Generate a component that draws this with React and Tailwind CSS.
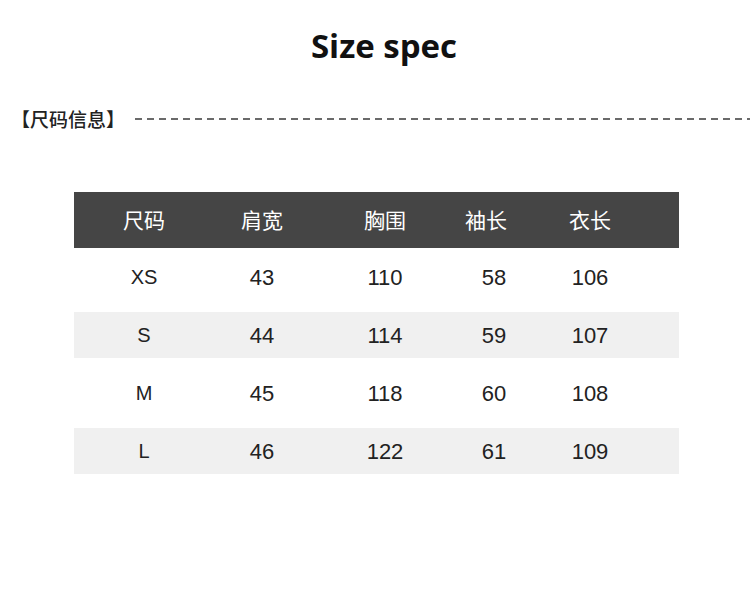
import React from 'react';

const headers = ['尺码', '肩宽', '胸围', '袖长', '衣长'];

const rows = [
  ['XS', '43', '110', '58', '106'],
  ['S', '44', '114', '59', '107'],
  ['M', '45', '118', '60', '108'],
  ['L', '46', '122', '61', '109'],
];

// column widths picked so each centre lands where the picture has it
const gridCols = 'grid grid-cols-[140px_96px_150px_60px_140px_1fr]';

function DashedLine() {
  return (
    <svg className="flex-1 h-[4px]" preserveAspectRatio="none">
      <line x1="0" y1="2" x2="100%" y2="2" stroke="#3a3a3a" strokeWidth="1.5" strokeDasharray="7 5" />
    </svg>
  );
}

export default function App() {
  return (
    <div className="w-[750px] h-[610px] bg-white overflow-hidden" style={{ fontFamily: '"Liberation Sans", "Noto Sans CJK SC", sans-serif' }}>
      <h1 className="pt-[23px] h-[69px] leading-[46px] text-center pl-[18px] text-[33px] font-bold text-[#111]" style={{ fontFamily: '"Open Sans", "Noto Sans", sans-serif' }}>
        Size spec
      </h1>

      <div className="mt-[37px] h-[24px] flex items-center pl-[11px]">
        <span className="text-[19px] font-medium text-[#222] leading-none" style={{ fontFamily: '"Noto Sans CJK SC", sans-serif' }}>
          【尺码信息】
        </span>
        <div className="flex-1 ml-[10px] flex items-center pt-[1px]">
          <DashedLine />
        </div>
      </div>

      <div className="mt-[62px] ml-[74px] w-[605px]">
        <div className={`${gridCols} h-[56px] items-center bg-[#454545] text-white text-[21px]`} style={{ fontFamily: '"Noto Sans CJK SC", sans-serif' }}>
          {headers.map((h, i) => (
            <div key={h} className={i === 3 ? 'text-center pr-[8px]' : 'text-center'}>
              {h}
            </div>
          ))}
        </div>

        {rows.map((r, ri) => (
          <div key={r[0]} className="py-[6px]">
            <div className={`${gridCols} h-[46px] items-center text-[22px] text-[#222] ${ri % 2 === 1 ? 'bg-[#f0f0f0]' : ''}`}>
              {r.map((c, ci) => (
                <div key={ci} className={ci === 0 ? 'text-center text-[20px]' : ci === 3 ? 'text-center pl-[8px]' : 'text-center'}>
                  {c}
                </div>
              ))}
            </div>
          </div>
        ))}
      </div>
    </div>
  );
}
